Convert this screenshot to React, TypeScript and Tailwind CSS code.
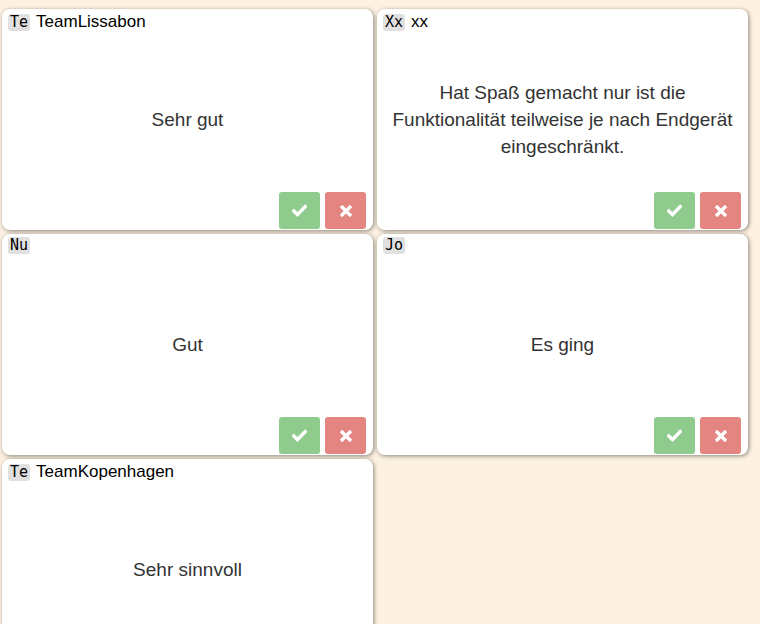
import React from "react";

type Item = { badge: string; name: string; text: string; buttons: boolean };

const items: Item[] = [
  { badge: "Te", name: "TeamLissabon", text: "Sehr gut", buttons: true },
  { badge: "Xx", name: "xx", text: "Hat Spaß gemacht nur ist die Funktionalität teilweise je nach Endgerät eingeschränkt.", buttons: true },
  { badge: "Nu", name: "", text: "Gut", buttons: true },
  { badge: "Jo", name: "", text: "Es ging", buttons: true },
  { badge: "Te", name: "TeamKopenhagen", text: "Sehr sinnvoll", buttons: false },
];

function Check() {
  return (
    <svg width="15" height="13" viewBox="0 0 15 13">
      <path d="M1.8 7 L5.5 10.5 L13.2 2.6" stroke="white" strokeWidth="3.4" fill="none" strokeLinecap="square" />
    </svg>
  );
}

function Times() {
  return (
    <svg width="12" height="12" viewBox="0 0 12 12">
      <path d="M2.2 2.2 L9.8 9.8 M9.8 2.2 L2.2 9.8" stroke="white" strokeWidth="3.4" fill="none" strokeLinecap="square" />
    </svg>
  );
}

function Card({ item }: { item: Item }) {
  return (
    <div className="relative flex h-[221px] flex-col rounded-[8px] bg-white shadow-[1px_1px_4px_rgba(0,0,0,0.45)]">
      <div className="flex items-center gap-[6px] pl-[6px] pt-[3px]">
        <span className="rounded-[3px] bg-[#e0e0e0] px-[2px] text-[15px] leading-[17px] text-black font-['DejaVu_Sans_Mono',monospace]">
          {item.badge}
        </span>
        <span className="text-[17px] leading-[20px] text-black font-['Liberation_Sans',Arial,sans-serif]">{item.name}</span>
      </div>
      <div className="absolute inset-0 flex items-center justify-center px-[14px] text-center text-[19px] leading-[27px] text-[#333] font-['Liberation_Sans',Arial,sans-serif]">
        {item.text}
      </div>
      {item.buttons && (
        <div className="absolute bottom-[1px] right-[7px] flex gap-[5px]">
          <button className="flex h-[37px] w-[41px] items-center justify-center rounded-[3px] bg-[#8fcb8c]">
            <Check />
          </button>
          <button className="flex h-[37px] w-[41px] items-center justify-center rounded-[3px] bg-[#e48581]">
            <Times />
          </button>
        </div>
      )}
    </div>
  );
}

export default function App() {
  return (
    <div className="min-h-[624px] w-[760px] overflow-hidden bg-[#fdf1e1] pl-[2px] pt-[9px]">
      <div className="grid w-[746px] grid-cols-2 gap-[4px]">
        {items.map((it, i) => (
          <Card key={i} item={it} />
        ))}
      </div>
    </div>
  );
}
